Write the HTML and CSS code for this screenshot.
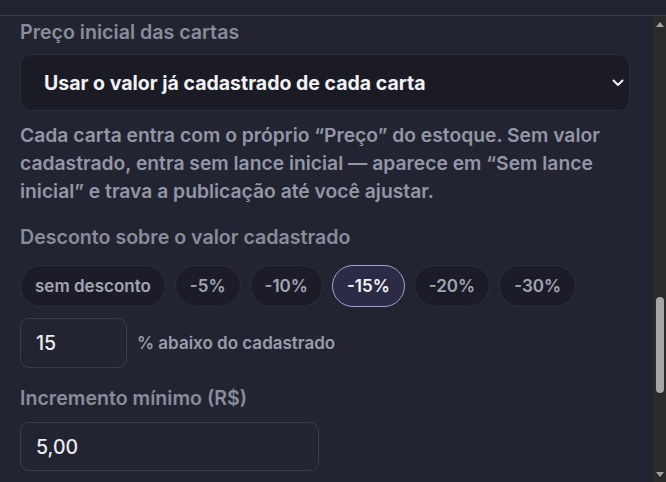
FILE: index.html
```html
<!DOCTYPE html>
<html lang="pt-BR">
<head>
<meta charset="utf-8">
<link rel="stylesheet" href="styles.css">
</head>
<body>
<div class="topbar"></div>
<div class="frame">
  <div class="content">
    <div class="label first">Preço inicial das cartas</div>
    <div class="select">
      <span class="select-text">Usar o valor já cadastrado de cada carta</span>
      <svg class="chev" width="12" height="8" viewBox="0 0 12 8"><path d="M1.5 1.5 L6 6 L10.5 1.5" fill="none" stroke="#f2f2f6" stroke-width="2" stroke-linecap="round" stroke-linejoin="round"/></svg>
    </div>
    <p class="help">Cada carta entra com o próprio “Preço” do estoque. Sem valor cadastrado, entra sem lance inicial — aparece em “Sem lance inicial” e trava a publicação até você ajustar.</p>
    <div class="label second">Desconto sobre o valor cadastrado</div>
    <div class="chips">
      <span class="chip">sem desconto</span>
      <span class="chip">-5%</span>
      <span class="chip">-10%</span>
      <span class="chip active">-15%</span>
      <span class="chip">-20%</span>
      <span class="chip">-30%</span>
    </div>
    <div class="pct-row">
      <div class="input small">15</div>
      <span class="pct-label">% abaixo do cadastrado</span>
    </div>
    <div class="label third">Incremento mínimo (R$)</div>
    <div class="input wide">5,00</div>
  </div>
  <div class="scrollbar">
    <div class="arrow up"></div>
    <div class="track"><div class="thumb" style="margin-top:265px"></div></div>
    <div class="arrow down"></div>
  </div>
</div>
</body>
</html>
```
FILE: styles.css
```css
html, body {
  margin: 0;
  padding: 0;
  height: 100%;
  overflow: hidden;
}
body {
  background: #222431;
  font-family: Inter, "Noto Sans", sans-serif;
  display: flex;
  flex-direction: column;
}
.topbar {
  height: 15px;
  flex: none;
  background: #212331;
  border-bottom: 1px solid #3a3c4b;
}
.frame {
  flex: 1;
  display: flex;
  min-height: 0;
}
.content {
  flex: 1;
  padding: 4px 23px 0 17px;
  border-left: 1px solid #1d1f2a;
  margin-left: 2px;
}
.label {
  font-size: 19.6px;
  line-height: 24px;
  font-weight: 600;
  color: #8a8c9c;
}
.label.second { margin-top: 20px; }
.label.third { margin-top: 18px; }
.select {
  margin-top: 10px;
  height: 55px;
  border: 1px solid #2b2d3b;
  border-radius: 11px;
  background: #1a1b25;
  display: flex;
  align-items: center;
  justify-content: space-between;
  padding: 0 5px 0 23px;
}
.select-text {
  font-size: 19.5px;
  font-weight: 700;
  color: #f2f2f6;
}
.chev { margin-top: 1px; }
.help {
  margin: 10px 0 0;
  font-size: 19.3px;
  line-height: 28px;
  font-weight: 600;
  color: #9496a7;
}
.chips {
  margin-top: 16px;
  display: flex;
  gap: 9px;
}
.chip {
  height: 40px;
  padding: 0 14px;
  border: 1px solid #2c2e3c;
  border-radius: 21px;
  background: #1b1c27;
  display: flex;
  align-items: center;
  font-size: 17px;
  font-weight: 600;
  color: #a2a4b3;
}
.chip.active {
  background: #2c2b45;
  border-color: #a79fd2;
  color: #f4f3fa;
}
.pct-row {
  margin-top: 11px;
  display: flex;
  align-items: center;
  gap: 10px;
}
.input {
  height: 48px;
  border: 1px solid #3a3c4a;
  border-radius: 9px;
  background: #222431;
  display: flex;
  align-items: center;
  padding-left: 15px;
  font-size: 19.5px;
  font-weight: 500;
  color: #ececf2;
  box-sizing: content-box;
}
.input.small { width: 90px; }
.input.wide { width: 282px; margin-top: 12px; height: 47px; }
.pct-label {
  font-size: 17px;
  font-weight: 600;
  color: #9a9cac;
}
.scrollbar {
  width: 13px;
  flex: none;
  background: #2a2a2c;
  display: flex;
  flex-direction: column;
}
.arrow {
  height: 16px;
  flex: none;
  display: flex;
  justify-content: center;
  align-items: center;
}
.arrow::before {
  content: "";
  width: 0;
  height: 0;
  border-left: 4px solid transparent;
  border-right: 4px solid transparent;
}
.arrow.up::before { border-bottom: 5px solid #a3a3a3; }
.arrow.down::before { border-top: 5px solid #a3a3a3; }
.track {
  flex: 1;
  display: flex;
  flex-direction: column;
  align-items: center;
}
.thumb {
  width: 8px;
  height: 96px;
  border-radius: 4px;
  background: #a6a6a6;
}
```
